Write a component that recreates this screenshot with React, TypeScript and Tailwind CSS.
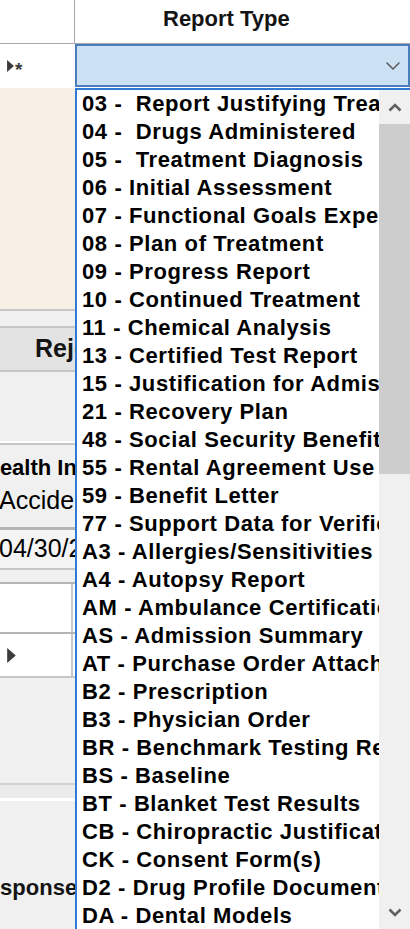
import { ChevronDown } from "lucide-react";

const REPORT_TYPES = [
  "03 -  Report Justifying Treatment Beyond Utilization Guidelines",
  "04 -  Drugs Administered",
  "05 -  Treatment Diagnosis",
  "06 - Initial Assessment",
  "07 - Functional Goals Expected to be Met",
  "08 - Plan of Treatment",
  "09 - Progress Report",
  "10 - Continued Treatment",
  "11 - Chemical Analysis",
  "13 - Certified Test Report",
  "15 - Justification for Admission",
  "21 - Recovery Plan",
  "48 - Social Security Benefit Letter",
  "55 - Rental Agreement Use",
  "59 - Benefit Letter",
  "77 - Support Data for Verification",
  "A3 - Allergies/Sensitivities Document",
  "A4 - Autopsy Report",
  "AM - Ambulance Certification",
  "AS - Admission Summary",
  "AT - Purchase Order Attachment",
  "B2 - Prescription",
  "B3 - Physician Order",
  "BR - Benchmark Testing Results",
  "BS - Baseline",
  "BT - Blanket Test Results",
  "CB - Chiropractic Justification",
  "CK - Consent Form(s)",
  "D2 - Drug Profile Document",
  "DA - Dental Models",
];

const font = "font-['Liberation_Sans',Arial,sans-serif]";

function Triangle({ className }: { className?: string }) {
  return (
    <svg viewBox="0 0 8 14" className={className} fill="#3c3c3c">
      <polygon points="0,0 8,7 0,14" />
    </svg>
  );
}

// cut-off cell text: the box stays inside the column, the text is clipped by it
const clipped = "block w-full overflow-hidden whitespace-nowrap";

function LeftColumn() {
  return (
    <div className="w-[75px] shrink-0 flex flex-col overflow-hidden">
      <div className="h-[44px] bg-white border-b border-r border-[#a8a8a8]" />
      <div className="h-[44px] bg-white flex items-center pl-[7px] gap-[1px]">
        <Triangle className="w-[7px] h-[12px]" />
        <span className="text-[19px] font-bold text-[#3c3c3c] leading-none mt-[6px]">*</span>
      </div>
      <div className="h-[221px] bg-[#f7efe6]" />
      <div className="h-[2px] bg-[#c6c6c6]" />
      <div className="h-[15px] bg-[#f0f0f0]" />
      <div className="h-[2px] bg-[#c6c6c6]" />
      <div className="h-[42px] bg-[#e3e3e3] flex items-center">
        <span className={`${clipped} pl-[35px] text-[25px] font-bold text-[#141414]`}>Rejection</span>
      </div>
      <div className="h-[2px] bg-[#c6c6c6]" />
      <div className="h-[69px] bg-[#f0f0f0]" />
      <div className="h-[2px] bg-white" />
      <div className="h-[2px] bg-[#c6c6c6]" />
      <div className="h-[82px] bg-[#f0f0f0] flex flex-col pt-[10px]">
        <span className={`${clipped} indent-[-16px] text-[22px] font-bold leading-[26px] text-black`}>Health Insurance</span>
        <span className={`${clipped} indent-[-1px] text-[25px] leading-[34px] text-black mt-[2px]`}>Accident</span>
      </div>
      <div className="h-[3px] bg-[#b4b4b4]" />
      <div className="h-[38px] bg-[#f4f4f4] flex items-center">
        <span className={`${clipped} indent-[-1px] text-[25px] text-black`}>04/30/2024</span>
      </div>
      <div className="h-[2px] bg-[#c6c6c6]" />
      <div className="h-[12px] bg-[#f0f0f0]" />
      <div className="h-[2px] bg-[#b4b4b4]" />
      <div className="h-[48px] bg-white border-r-2 border-[#c8c8c8] mr-[2px]" />
      <div className="h-[2px] bg-[#b4b4b4]" />
      <div className="h-[42px] bg-white border-r-2 border-[#c8c8c8] mr-[2px] flex items-center pl-[7px]">
        <Triangle className="w-[9px] h-[15px]" />
      </div>
      <div className="h-[2px] bg-[#c6c6c6]" />
      <div className="h-[105px] bg-[#f0f0f0]" />
      <div className="h-[2px] bg-[#d2d2d2]" />
      <div className="h-[13px] bg-[#ebebeb]" />
      <div className="h-[3px] bg-white" />
      <div className="flex-1 bg-[#f0f0f0] flex flex-col justify-end pb-[25px]">
        <span className={`${clipped} indent-[-28px] text-[22px] font-bold text-[#141414]`}>Response</span>
      </div>
    </div>
  );
}

function ScrollBar() {
  return (
    <div className="w-[31px] shrink-0 bg-[#f0f0f0] flex flex-col">
      <div className="h-[34px] flex items-center justify-center">
        <svg viewBox="0 0 14 9" className="w-[14px] h-[9px]" fill="none" stroke="#606060" strokeWidth="2.6">
          <polyline points="1.5,7.5 7,2 12.5,7.5" />
        </svg>
      </div>
      <div className="h-[350px] bg-[#cdcdcd]" />
      <div className="flex-1" />
      <div className="h-[34px] flex items-center justify-center">
        <svg viewBox="0 0 14 9" className="w-[14px] h-[9px]" fill="none" stroke="#606060" strokeWidth="2.6">
          <polyline points="1.5,1.5 7,7 12.5,1.5" />
        </svg>
      </div>
    </div>
  );
}

export default function App() {
  return (
    <div className={`h-[929px] w-[410px] overflow-hidden flex bg-white ${font}`}>
      <LeftColumn />
      <div className="flex-1 min-w-0 flex flex-col">
        <div className="h-[44px] shrink-0 border-b border-[#a8a8a8] flex items-center pl-[88px] whitespace-nowrap">
          <span className="text-[22px] font-bold text-[#141414] pb-[6px]">Report Type</span>
        </div>
        <div className="h-[43px] shrink-0 bg-[#cde1f5] border-2 border-[#4b7cbc] flex items-center justify-end pr-[3px]">
          <ChevronDown className="w-[24px] h-[24px] text-[#5a5a5a]" strokeWidth={1.5} />
        </div>
        <div className="h-px shrink-0 bg-white" />
        <div className="flex-1 min-h-0 flex border-l-[2px] border-t-[2px] border-[#2f7bd4] bg-white">
          <ul className="flex-1 min-w-0 overflow-hidden pl-[5px]">
            {REPORT_TYPES.map((t) => (
              <li
                key={t}
                className="h-[28px] leading-[28px] text-[22px] font-bold tracking-[0.6px] text-black whitespace-pre overflow-hidden"
              >
                {t}
              </li>
            ))}
          </ul>
          <ScrollBar />
        </div>
      </div>
    </div>
  );
}
